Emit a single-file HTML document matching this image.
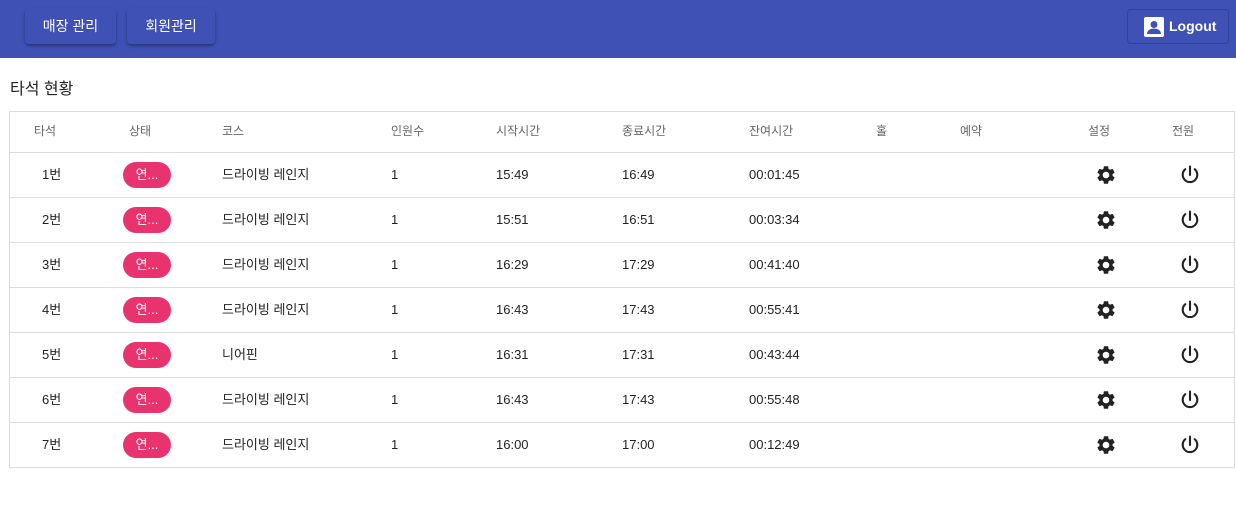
<!DOCTYPE html>
<html><head><meta charset="utf-8"><style>
*{box-sizing:border-box;margin:0;padding:0}
body{width:1236px;height:518px;background:#fff;font-family:"Liberation Sans","Noto Sans CJK KR",sans-serif;position:relative;overflow:hidden}
.bar{position:absolute;left:0;top:0;width:1236px;height:58px;background:#3f51b5}
.btn{position:absolute;top:8px;height:36px;background:#3f51b5;color:#fff;font-size:14px;line-height:36px;text-align:center;border-radius:4px;box-shadow:0 2px 3px rgba(0,0,0,.35)}
.lo{position:absolute;left:1127px;top:9px;width:102px;height:35px;border:1px solid rgba(0,0,0,.18);border-radius:4px;color:#fff;font-size:14px;font-weight:bold;line-height:33px}
h1{position:absolute;left:10px;top:75px;font-size:16px;font-weight:normal;color:#222}
.tbl{position:absolute;left:9px;top:111px;width:1226px;height:357px;border:1px solid #ddd}
.row{position:absolute;left:0;width:1224px;border-bottom:1px solid #ddd;font-size:13px;color:#222}
.row span{position:absolute}
.hd{color:#666;font-size:12px}
.chip{position:absolute;width:48px;height:26px;border-radius:13px;background:#e8336f;color:#fff;font-size:13px;text-align:center;line-height:26px}
svg.i{position:absolute}
</style></head><body>
<div class="bar"></div>
<div class="btn" style="left:25px;width:91px">매장 관리</div>
<div class="btn" style="left:127px;width:88px">회원관리</div>
<div class="lo"><svg width="20" height="20" viewBox="0 0 20 20" style="position:absolute;left:16px;top:7px"><rect x="0" y="0" width="20" height="20" rx="2" fill="#fff"/><circle cx="10" cy="7.5" r="3.5" fill="#3f51b5"/><path d="M3 17c0-4 4-5.5 7-5.5s7 1.5 7 5.5z" fill="#3f51b5"/></svg><span style="position:absolute;left:41px">Logout</span></div>
<h1>타석 현황</h1>
<div class="tbl">
<div class="row hd" style="top:0;height:41px;line-height:38px">
<span style="left:24px">타석</span><span style="left:119px">상태</span><span style="left:212px">코스</span><span style="left:381px">인원수</span><span style="left:486px">시작시간</span><span style="left:612px">종료시간</span><span style="left:739px">잔여시간</span><span style="left:866px">홀</span><span style="left:950px">예약</span><span style="left:1078px">설정</span><span style="left:1162px">전원</span>
</div>
</div>
<script>
var d=[["1번","드라이빙 레인지","15:49","16:49","00:01:45"],["2번","드라이빙 레인지","15:51","16:51","00:03:34"],["3번","드라이빙 레인지","16:29","17:29","00:41:40"],["4번","드라이빙 레인지","16:43","17:43","00:55:41"],["5번","니어핀","16:31","17:31","00:43:44"],["6번","드라이빙 레인지","16:43","17:43","00:55:48"],["7번","드라이빙 레인지","16:00","17:00","00:12:49"]];
var h="";
d.forEach(function(r,i){var t=41+i*45;
h+='<div class="row" style="top:'+t+'px;height:45px;line-height:44px'+(i==6?';border-bottom:none':'')+'"><span style="left:32px">'+r[0]+'</span><div class="chip" style="left:113px;top:9px">연...</div><span style="left:212px">'+r[1]+'</span><span style="left:381px">1</span><span style="left:486px">'+r[2]+'</span><span style="left:612px">'+r[3]+'</span><span style="left:739px">'+r[4]+'</span>'+
'<svg class="i" style="left:1085px;top:11px" width="22" height="22" viewBox="0 0 24 24"><path fill="#222" d="M19.14 12.94c.04-.3.06-.61.06-.94 0-.32-.02-.64-.07-.94l2.03-1.58a.49.49 0 0 0 .12-.61l-1.92-3.320a.488.488 0 0 0-.59-.22l-2.39.96c-.5-.38-1.03-.7-1.62-.94l-.36-2.54a.484.484 0 0 0-.48-.41h-3.84c-.24 0-.43.17-.47.41l-.36 2.54c-.59.24-1.130.57-1.62.94l-2.39-.96c-.22-.08-.47 0-.59.22L2.74 8.87c-.12.21-.08.47.12.61l2.03 1.58c-.05.3-.09.63-.09.94s.02.64.07.94l-2.03 1.58a.49.49 0 0 0-.12.61l1.92 3.32c.12.22.37.29.59.22l2.39-.96c.5.38 1.03.7 1.62.94l.36 2.54c.05.24.24.41.48.41h3.84c.24 0 .44-.17.47-.41l.36-2.54c.59-.24 1.13-.56 1.62-.94l2.39.96c.22.08.47 0 .59-.22l1.92-3.32c.12-.22.07-.47-.12-.61l-2.01-1.58zM12 15.6c-1.98 0-3.6-1.62-3.6-3.6s1.62-3.6 3.6-3.6 3.6 1.62 3.6 3.6-1.62 3.6-3.6 3.6z"/></svg>'+
'<svg class="i" style="left:1168px;top:10px" width="24" height="24" viewBox="0 0 24 24"><path fill="none" stroke="#222" stroke-width="2.1" stroke-linecap="round" d="M12 3.5v8.5M7.3 6.2a7.3 7.3 0 1 0 9.4 0"/></svg></div>';});
document.querySelector('.tbl').insertAdjacentHTML('beforeend',h);
</script>
</body></html>
